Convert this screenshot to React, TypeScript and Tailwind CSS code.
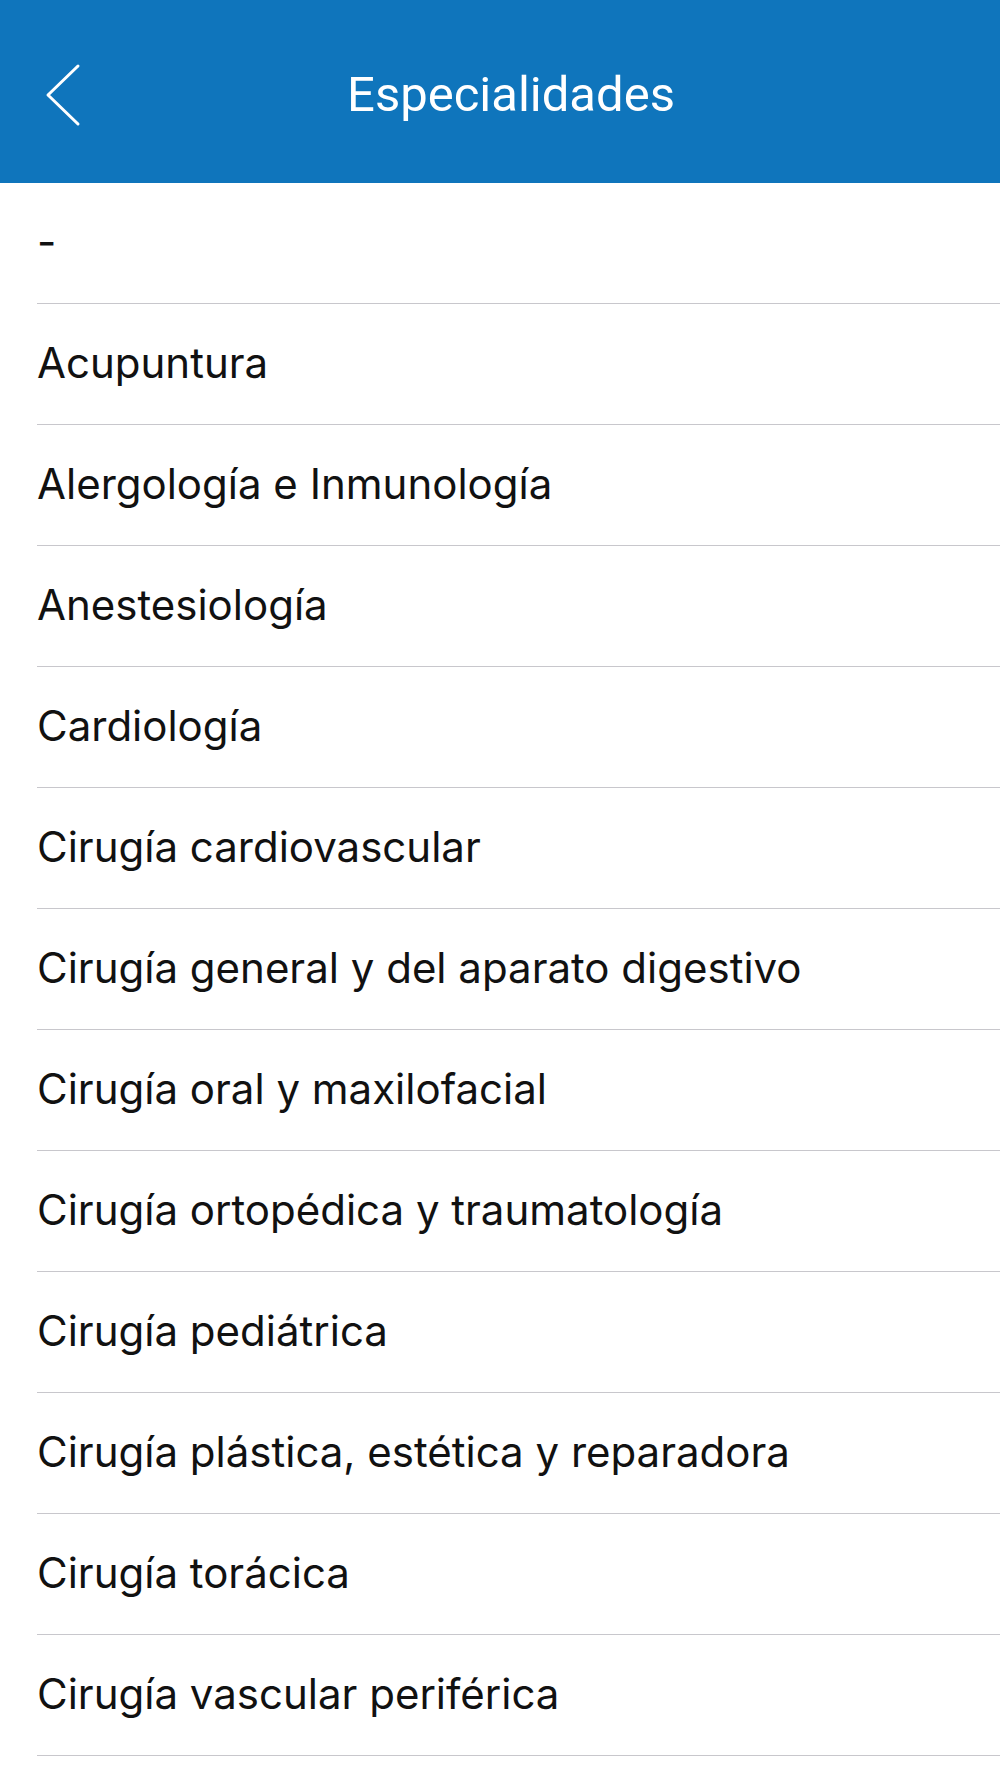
import React from "react";

const items = [
  "-",
  "Acupuntura",
  "Alergología e Inmunología",
  "Anestesiología",
  "Cardiología",
  "Cirugía cardiovascular",
  "Cirugía general y del aparato digestivo",
  "Cirugía oral y maxilofacial",
  "Cirugía ortopédica y traumatología",
  "Cirugía pediátrica",
  "Cirugía plástica, estética y reparadora",
  "Cirugía torácica",
  "Cirugía vascular periférica",
];

export default function App() {
  return (
    <div className="w-[1000px] h-[1778px] overflow-hidden bg-white">
      <header className="h-[183px] bg-[#0f75bc] flex items-center relative">
        <button className="absolute left-[44px] top-[62px] p-0">
          <svg width="40" height="66" viewBox="0 0 40 66" fill="none">
            <path d="M34 4 L4 33 L34 62" stroke="white" strokeWidth="3" strokeLinecap="round" strokeLinejoin="round" />
          </svg>
        </button>
        <h1 className="w-full text-center pl-[22px] pt-[6px] text-white text-[49px] font-['Roboto',sans-serif] leading-none">
          Especialidades
        </h1>
      </header>
      <ul className="pl-[37px]">
        {items.map((item) => (
          <li
            key={item}
            className="h-[121px] flex items-center pb-[4px] border-b border-[#c8c7cc] text-[#111] text-[42px] font-['Inter',sans-serif]"
          >
            {item}
          </li>
        ))}
      </ul>
    </div>
  );
}
